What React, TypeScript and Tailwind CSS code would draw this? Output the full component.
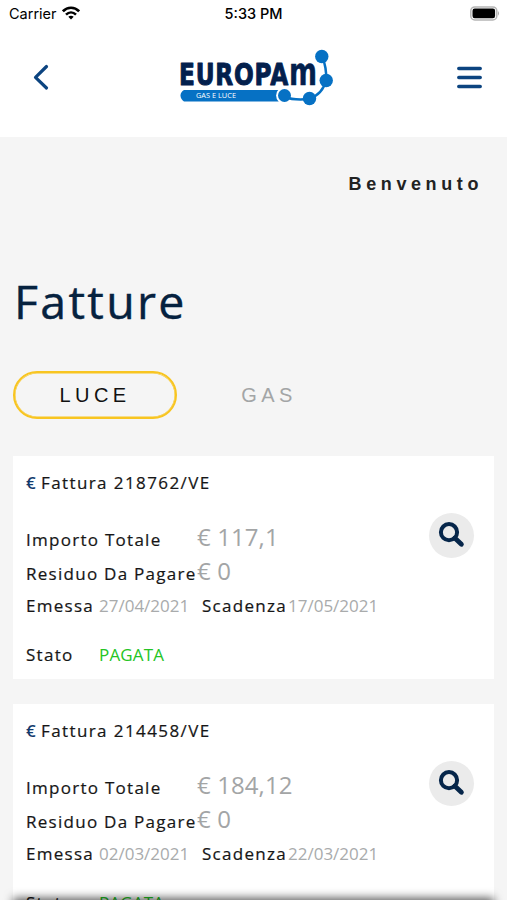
interface Invoice {
  number: string;
  total: string;
  residual: string;
  issued: string;
  due: string;
  status: string;
}

interface InvoiceProps {
  invoice: Invoice;
}

const invoices: Invoice[] = [
  {
    number: '218762/VE',
    total: '€ 117,1',
    residual: '€ 0',
    issued: '27/04/2021',
    due: '17/05/2021',
    status: 'PAGATA',
  },
  {
    number: '214458/VE',
    total: '€ 184,12',
    residual: '€ 0',
    issued: '02/03/2021',
    due: '22/03/2021',
    status: 'PAGATA',
  },
];

function Logo() {
  return (
    <svg width="160" height="60" viewBox="0 0 160 60" className="block">
      <g
        fill="#03204d"
        stroke="#03204d"
        strokeWidth="1"
        strokeLinejoin="round"
        fontFamily="'DejaVu Sans', sans-serif"
        fontWeight="700"
      >
        <text x="3" y="36.700" fontSize="30.500" letterSpacing="1" textLength="110" lengthAdjust="spacingAndGlyphs">
          EUROPA
        </text>
        <text x="113" y="36.700" fontSize="38" strokeWidth="0.500" textLength="28" lengthAdjust="spacingAndGlyphs">
          m
        </text>
      </g>
      <path d="M8 42 H107 V53.5 H8 Q4.500 51 4.500 47.500 Q4.500 44 8 42Z" fill="#0671c4" />
      <text
        x="20"
        y="50.300"
        fill="#fff"
        fontSize="7.200"
        fontFamily="'Open Sans', sans-serif"
        textLength="40"
        lengthAdjust="spacingAndGlyphs"
      >
        GAS E LUCE
      </text>
      <circle cx="108.500" cy="47.500" r="8.400" fill="#fff" />
      <path
        d="M108.500 49 Q118 52.500 133 51 Q147 46 150 32 Q151 20 146 8.500"
        fill="none"
        stroke="#0671c4"
        strokeWidth="2.500"
      />
      <g fill="#0671c4">
        <circle cx="145.800" cy="8.500" r="6.700" />
        <circle cx="150.200" cy="32.500" r="6.700" />
        <circle cx="133.500" cy="50.500" r="6.700" />
        <circle cx="108.500" cy="47.500" r="6.500" />
      </g>
    </svg>
  );
}

function StatusBar() {
  return (
    <div className="grid h-7 grid-cols-3 items-center font-[Inter,sans-serif] text-black">
      <div className="flex items-center gap-[5px] pl-[9px] text-[14.5px]">
        <span>Carrier</span>
        <svg width="18" height="14" viewBox="0 0 18 14" className="-mt-0.5" fill="none" stroke="#000" strokeWidth="2.600">
          <path d="M0.900 5.300 C5.500 0.600 12.500 0.600 17.100 5.300" />
          <path d="M4 8.600 C7 5.700 11 5.700 14 8.600" />
          <path d="M6.300 10.800 Q9 8.500 11.700 10.800 L9 13.500Z" fill="#000" stroke="none" />
        </svg>
      </div>
      <p className="text-center text-[14.5px] font-medium">5:33 PM</p>
      <div className="-mt-0.5 flex justify-end pr-[7px]">
        <svg width="30" height="15" viewBox="0 0 30 15">
          <rect x="0.800" y="0.900" width="26" height="13" rx="4" fill="#fff" stroke="#b5b5b5" strokeWidth="1.500" />
          <rect x="2.500" y="2.600" width="22.600" height="9.600" rx="2.200" fill="#000" />
          <path d="M28 5 Q30 7.400 28 9.800Z" fill="#aaa" />
        </svg>
      </div>
    </div>
  );
}

function Header() {
  return (
    <header className="flex h-[109px] items-start justify-between pr-[25px] pl-8">
      <svg width="18" height="28" viewBox="0 0 18 28" className="mt-[35px]">
        <path
          d="M14.500 3.500 L3.500 14.300 L14.500 25"
          fill="none"
          stroke="#0c4480"
          strokeWidth="3.200"
          strokeLinecap="round"
          strokeLinejoin="round"
        />
      </svg>
      <div className="mt-5 ml-[5px]">
        <Logo />
      </div>
      <svg width="25" height="24" viewBox="0 0 25 24" className="mt-[38px]" stroke="#0c4480" strokeWidth="3.500" strokeLinecap="round">
        <path d="M1.800 2.500H23.200M1.800 11.500H23.200M1.800 20.600H23.200" />
      </svg>
    </header>
  );
}

function Card({ invoice }: InvoiceProps) {
  return (
    <article className="relative h-[223px] bg-white pt-[10px] pl-[13px] text-[17px] tracking-[1.27px] text-[#161616]">
      <h2 className="flex h-[34px] items-center tracking-[1.4px]">
        <span className="w-[15px] font-semibold text-[#133a6d]">€</span>
        <span className="[-webkit-text-stroke:0.2px]">Fattura {invoice.number}</span>
      </h2>
      <dl className="mt-[20px]">
        <div className="flex h-[34px] items-baseline leading-[34px]">
          <dt className="w-[171px] whitespace-nowrap [-webkit-text-stroke:0.2px]">Importo Totale</dt>
          <dd className="text-[24px] tracking-[0.1px] text-[#a3a5a6]">{invoice.total}</dd>
        </div>
        <div className="flex h-[34px] items-baseline leading-[34px]">
          <dt className="w-[171px] whitespace-nowrap [-webkit-text-stroke:0.2px]">Residuo Da Pagare</dt>
          <dd className="text-[24px] tracking-[0.1px] text-[#a3a5a6]">{invoice.residual}</dd>
        </div>
        <div className="mt-px flex h-[34px] items-center">
          <dt className="w-[73px] [-webkit-text-stroke:0.2px]">Emessa</dt>
          <dd className="w-[103px] tracking-normal text-[#a9abac]">{invoice.issued}</dd>
          <dt className="w-[86px] [-webkit-text-stroke:0.2px]">Scadenza</dt>
          <dd className="tracking-normal text-[#a9abac]">{invoice.due}</dd>
        </div>
        <div className="mt-[15px] flex h-[34px] items-center">
          <dt className="w-[73px] [-webkit-text-stroke:0.2px]">Stato</dt>
          <dd className="tracking-[0.15px] text-[#24c424]">{invoice.status}</dd>
        </div>
      </dl>
      <button className="absolute top-[57px] right-5 flex size-[45px] items-center justify-center rounded-full bg-[#ebebeb]">
        <svg width="27" height="27" viewBox="0 0 27 27" fill="none" stroke="#06264a" strokeWidth="4">
          <circle cx="11" cy="10.200" r="8.100" />
          <path d="M16.800 16 L23.400 22.300" strokeWidth="4.800" strokeLinecap="round" />
        </svg>
      </button>
    </article>
  );
}

export default function App() {
  return (
    <div className="relative h-[900px] w-[507px] overflow-hidden bg-[#f5f5f5] font-['Open_Sans',sans-serif]">
      <div className="bg-white">
        <StatusBar />
        <Header />
      </div>

      <main className="px-[13px]">
        <p className="mt-[35px] pr-[11px] text-right font-['Liberation_Sans',sans-serif] text-[18px] leading-6 font-bold tracking-[4.6px] text-[#222]">
          Benvenuto
        </p>
        <h1 className="mt-[73px] ml-px text-[46.5px] leading-[64px] tracking-[2.3px] text-[#06223f] [-webkit-text-stroke:0.4px]">
          Fatture
        </h1>

        {/* Supply type */}
        <nav className="mt-[38px] flex font-['Liberation_Sans',sans-serif] text-[20px] tracking-[4.4px]">
          <button className="h-[48px] w-[164px] rounded-full border-2 border-[#f8c521] text-[#111] shadow-[inset_0_0_0_0.5px_#f8c521]">
            LUCE
          </button>
          <button className="ml-[9px] h-[48px] w-[166px] text-[#a3a5a6]">GAS</button>
        </nav>

        <section className="mt-[37px] flex flex-col gap-[25px]">
          {invoices.map((invoice) => (
            <Card key={invoice.number} invoice={invoice} />
          ))}
        </section>
      </main>

      {/* Shadow of the bottom bar */}
      <div className="absolute top-[901px] left-4 h-5 w-[475px] shadow-[0_0_10px_3px_rgba(0,0,0,0.65)]"></div>
    </div>
  );
}
